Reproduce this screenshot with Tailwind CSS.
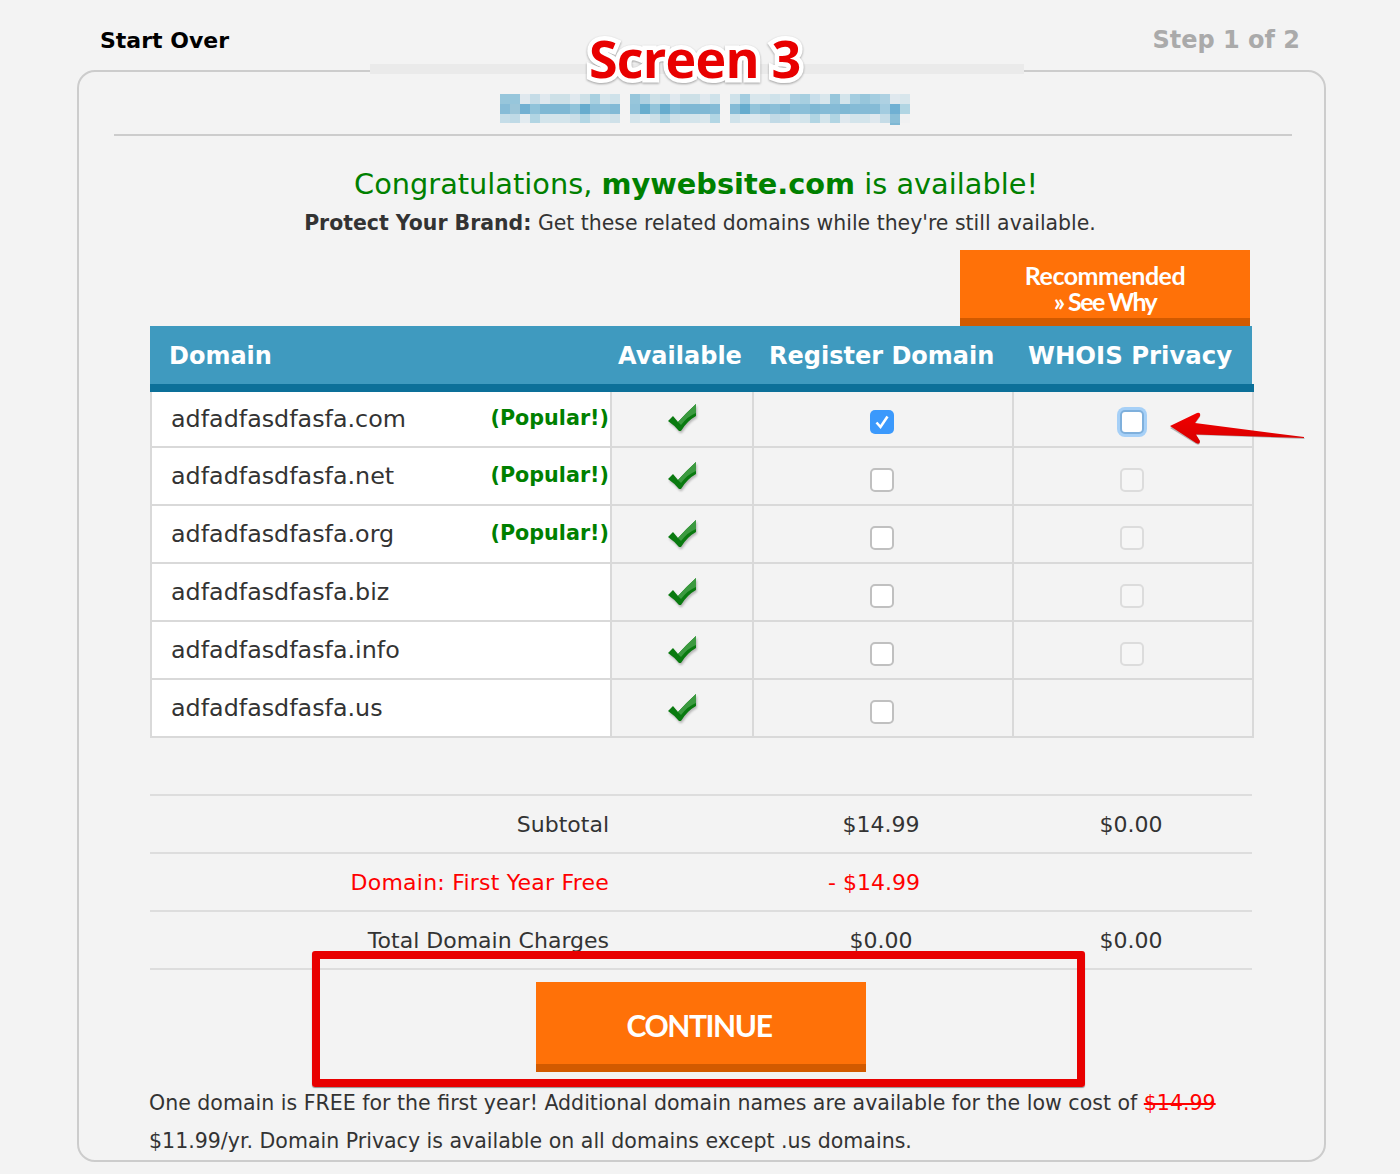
<!DOCTYPE html>
<html lang="en">
<head>
    <meta charset="UTF-8">
    <meta name="viewport" content="width=device-width, initial-scale=1.0">
    <title>Domain Registration</title>
    <script src="https://cdn.jsdelivr.net/npm/@tailwindcss/browser@4"></script>
</head>
<body class="bg-[#f3f3f3] font-['DejaVu_Sans',sans-serif] text-[#333]">
    <div class="relative w-[1400px] h-[1174px] overflow-hidden">
        <!-- top links -->
        <div class="flex justify-between px-[100px] pt-[26px] h-[70px]">
            <a class="text-[22px] leading-[30px] font-bold text-black">Start Over</a>
            <span class="text-[24px] leading-[28px] font-bold text-[#aaa]">Step 1 of 2</span>
        </div>

        <!-- card -->
        <div class="relative ml-[77px] w-[1249px] h-[1092px] border-2 border-[#ccc] rounded-[18px] pt-[62px] pl-[35px] pr-[32px]">
            <div class="absolute left-[291px] top-[-8px] w-[654px] h-[10px] bg-[#eaeaea]"></div>
            <div class="absolute left-[421px] top-[22px]">
                <div id="mosaic" class="flex gap-[10px]"></div>
                <div class="absolute left-[390px] top-[29px] w-[10px] h-[2px] bg-[#7fb8d4]"></div>
            </div>
            <div class="h-[2px] bg-[#ccc]"></div>

            <div class="text-center">
                <h1 class="mt-[26px] pr-[14px] text-[28.8px] leading-[44px] text-[#008000]">Congratulations, <b>mywebsite.com</b> is available!</h1>
                <p class="mt-[3px] pr-[6px] text-[20.45px] leading-[28px]"><b>Protect Your Brand:</b> Get these related domains while they're still available.</p>
            </div>

            <div class="w-[1104px] ml-[36px] mt-[13px]">
                <div class="ml-[810px] w-[290px] h-[76px] bg-[#ff7108] border-b-8 border-[#d25a00] pt-[12px] text-center text-white font-['Lato',sans-serif] font-bold text-[25px] leading-[26px] tracking-[-0.5px]">
                    Recommended<br><span class="tracking-[-1.6px]">» See Why</span>
                </div>
                <div class="w-[1102px] h-[58px] pt-[2px] bg-[#3f9abf] flex items-center text-white font-bold text-[24px]">
                    <div class="w-[468px] pl-[19px]">Domain</div>
                    <div class="w-[136px]">Available</div>
                    <div class="w-[260px] pl-[15px]">Register Domain</div>
                    <div class="w-[238px] pl-[14px] text-[24.4px]">WHOIS Privacy</div>
                </div>
                <div class="h-[8px] bg-[#0c7099]"></div>

                <div id="rows"></div>

                <!-- totals -->
                <div class="w-[1102px] mt-[56px] text-[22px] border-b-2 border-[#ddd]">
                    <div class="flex items-center h-[58px] border-t-2 border-[#ddd]">
                        <div class="w-[459px] text-right">Subtotal</div>
                        <div class="ml-[145px] w-[254px] text-center">$14.99</div>
                        <div class="ml-[6px] w-[234px] text-center">$0.00</div>
                    </div>
                    <div class="flex items-center h-[58px] border-t-2 border-[#ddd] text-[#f00]">
                        <div class="w-[459px] text-right tracking-[0.22px]">Domain: First Year Free</div>
                        <div class="ml-[145px] w-[254px] text-center pr-[14px]">- $14.99</div>
                    </div>
                    <div class="flex items-center h-[58px] border-t-2 border-[#ddd]">
                        <div class="w-[459px] text-right">Total Domain Charges</div>
                        <div class="ml-[145px] w-[254px] text-center">$0.00</div>
                        <div class="ml-[6px] w-[234px] text-center">$0.00</div>
                    </div>
                </div>

                <div class="ml-[386px] mt-[12px] w-[330px] h-[90px] bg-[#ff7108] border-b-8 border-[#d25a00] flex items-center justify-center pt-[4px] pr-[4px] text-white font-['Lato',sans-serif] font-bold text-[30px] tracking-[-1.4px]">
                    CONTINUE
                </div>
            </div>

            <p class="ml-[35px] mt-[12px] w-[1100px] text-[20.54px] leading-[38px]">One domain is FREE for the first year! Additional domain names are available for the low cost of <span class="text-[#f00] line-through">$14.99</span> $11.99/yr. Domain Privacy is available on all domains except .us domains.</p>
        </div>

        <!-- annotations on top of the screenshot -->
        <div class="absolute left-[589px] top-[18px] font-['Open_Sans',sans-serif] font-bold text-[52px] leading-[80px] tracking-[-0.8px] text-[#e80000] [-webkit-text-stroke:9px_white] [paint-order:stroke_fill] drop-shadow-[0_1px_1px_rgba(0,0,0,0.35)]">Screen 3</div>
        <div class="absolute left-[312px] top-[951px] w-[773px] h-[136px] border-[8px] border-[#e80000] rounded-[3px] shadow-[0_1px_1px_rgba(0,0,0,0.4)]"></div>
        <svg class="absolute left-[1160px] top-[405px]" width="150" height="45" viewBox="0 0 150 45">
            <defs>
                <linearGradient id="arrowFill" x1="0" y1="0" x2="0" y2="1">
                    <stop offset="0" stop-color="#f20000"/>
                    <stop offset="1" stop-color="#d80000"/>
                </linearGradient>
            </defs>
            <path d="M10 22 L37 8 Q41 7 40 11 L35 18 L144 32 L145 33 L36 29 L40 36 Q40 40 36 38 Z" fill="#777" opacity="0.5" transform="translate(0 1)"/>
            <path d="M10 21 L37 8 Q41 7 40 11 L35 18 L144 32 L144 33 L36 29.5 L40 36 Q40 40 36 38 Z" fill="url(#arrowFill)"/>
        </svg>
    </div>

    <script>
        const mosaic = [
            [['#97c6db','#97c6db','#dfe8ee','#c5dce7','#dfe8ee','#cde0e7','#cde0e7','#dfe8ee','#cde0e7','#a9d0e0','#d8e6ec','#cfe2ea'],
             ['#87bcd7','#9cc6d9','#71b0d2','#90c3da','#7fb8d4','#7fb8d4','#7fb8d4','#91c3da','#66acce','#8bbfd8','#8bbfd8','#82bad6'],
             ['#c5dde8','#bfdae6','#e2ebf0','#b1d5e3','#d3e4eb','#d3e4eb','#d3e4eb','#cbdfe8','#b2d6e4','#d0e2ea','#d5e5ec','#cfe1e9']],
            [['#97c6db','#aed1e1','#cde0e7','#c5dce7','#dfe8ee','#cde0e7','#cde0e7','#dfe8ee','#cfe2ea'],
             ['#92c3da','#69aece','#93c4da','#66acce','#89bed8','#7fb8d4','#7fb8d4','#7fb8d4','#85bbd6'],
             ['#d3e4eb','#dbe8ee','#cde0e8','#b1d5e3','#cfe1e9','#d3e4eb','#d3e4eb','#d8e6ec','#b2d6e4']],
            [['#cfe2ea','#a4cde0','#d8e6ec','#d8e6ec','#cfe2ea','#d8e6ec','#aed1e2','#a7cfe0','#c8deea','#d8e6ec','#97c6db','#d3e4eb','#a4cde0','#97c6db','#a4cde0','#aed1e2','#dfe8ee','#d8e6ec'],
             ['#85bbd6','#66acce','#93c4da','#85bbd6','#8bbfd8','#7fb8d4','#8bbfd8','#8bbfd8','#7fb8d4','#85bbd6','#85bbd6','#7fb8d4','#85bbd6','#85bbd6','#85bbd6','#a3cce0','#70b0d3','#b1d5e3'],
             ['#cfe2ea','#dbe8ee','#dbe8ee','#d8e6ec','#c1dae6','#c5dde8','#d8e6ec','#d3e4eb','#b1d5e3','#d3e4eb','#b1d5e3','#dfe8ee','#d3e4eb','#d3e4eb','#dfe8ee','#c5dce7','#8bbfd8','#f0f1f2']]
        ];
        document.getElementById('mosaic').innerHTML = mosaic.map(seg => '<div>' + seg.map((row, r) =>
            `<div class="flex ${r === 2 ? 'h-[9px]' : 'h-[10px]'}">` + row.map(c => `<span class="w-[10px] h-full" style="background:${c}"></span>`).join('') + '</div>'
        ).join('') + '</div>').join('');

        const check = `<svg width="30" height="30" viewBox="0 0 30 30" class="drop-shadow-[1px_2px_1px_rgba(0,0,0,0.25)]">
            <path d="M0 17 L5 12 L10 18 Q18 9 28 0 L28 12 Q19 17 13 27 L11 27 Q6 21 0 17 Z" fill="#0a7a10"/>
            <path d="M10 18 Q18 9 28 0 L28 9 Q20 12 13 21 Z" fill="#3c9a40"/>
        </svg>`;
        const tick = `<svg width="24" height="24" viewBox="0 0 24 24"><path d="M6.5 12.5 L10.5 17 L17.5 6.5" fill="none" stroke="#fff" stroke-width="2.6"/></svg>`;

        const boxOn = `<div class="w-[24px] h-[24px] rounded-[5px] bg-[#3b99fc]">${tick}</div>`;
        const boxOff = `<div class="w-[24px] h-[24px] rounded-[5px] bg-white border-2 border-[#c0c0c0]"></div>`;
        const boxDisabled = `<div class="w-[24px] h-[24px] rounded-[5px] bg-[#f6f6f6] border-2 border-[#dcdcdc]"></div>`;
        const boxFocus = `<div class="w-[24px] h-[24px] rounded-[5px] bg-white border-2 border-[#7fb0dc] shadow-[0_0_0_3px_#a6d0f7]"></div>`;

        const domains = [
            ['com', true, boxOn, boxFocus],
            ['net', true, boxOff, boxDisabled],
            ['org', true, boxOff, boxDisabled],
            ['biz', false, boxOff, boxDisabled],
            ['info', false, boxOff, boxDisabled],
            ['us', false, boxOff, '']
        ];
        document.getElementById('rows').innerHTML = domains.map(([tld, popular, reg, whois], i) => {
            const first = i === 0;
            return `<div class="flex ${first ? 'h-[56px]' : 'h-[58px]'} w-[1104px] border-b-2 border-[#d9d9d9]">
                <div class="w-[462px] h-full bg-white border-x-2 border-[#d9d9d9] flex items-center justify-between pl-[19px] pr-[1px] pt-[2px]">
                    <span class="text-[23.8px]">adfadfasdfasfa.${tld}</span>
                    ${popular ? '<span class="text-[20.7px] font-bold text-[#008000] mb-[2px]">(Popular!)</span>' : ''}
                </div>
                <div class="w-[142px] h-full border-r-2 border-[#d9d9d9] pl-[56px] ${first ? 'pt-[12px]' : 'pt-[14px]'}">${check}</div>
                <div class="w-[260px] h-full border-r-2 border-[#d9d9d9] pl-[116px] ${first ? 'pt-[18px]' : 'pt-[20px]'}">${reg}</div>
                <div class="w-[240px] h-full border-r-2 border-[#d9d9d9] pl-[106px] ${first ? 'pt-[18px]' : 'pt-[20px]'}">${whois}</div>
            </div>`;
        }).join('');
    </script>
</body>
</html>
